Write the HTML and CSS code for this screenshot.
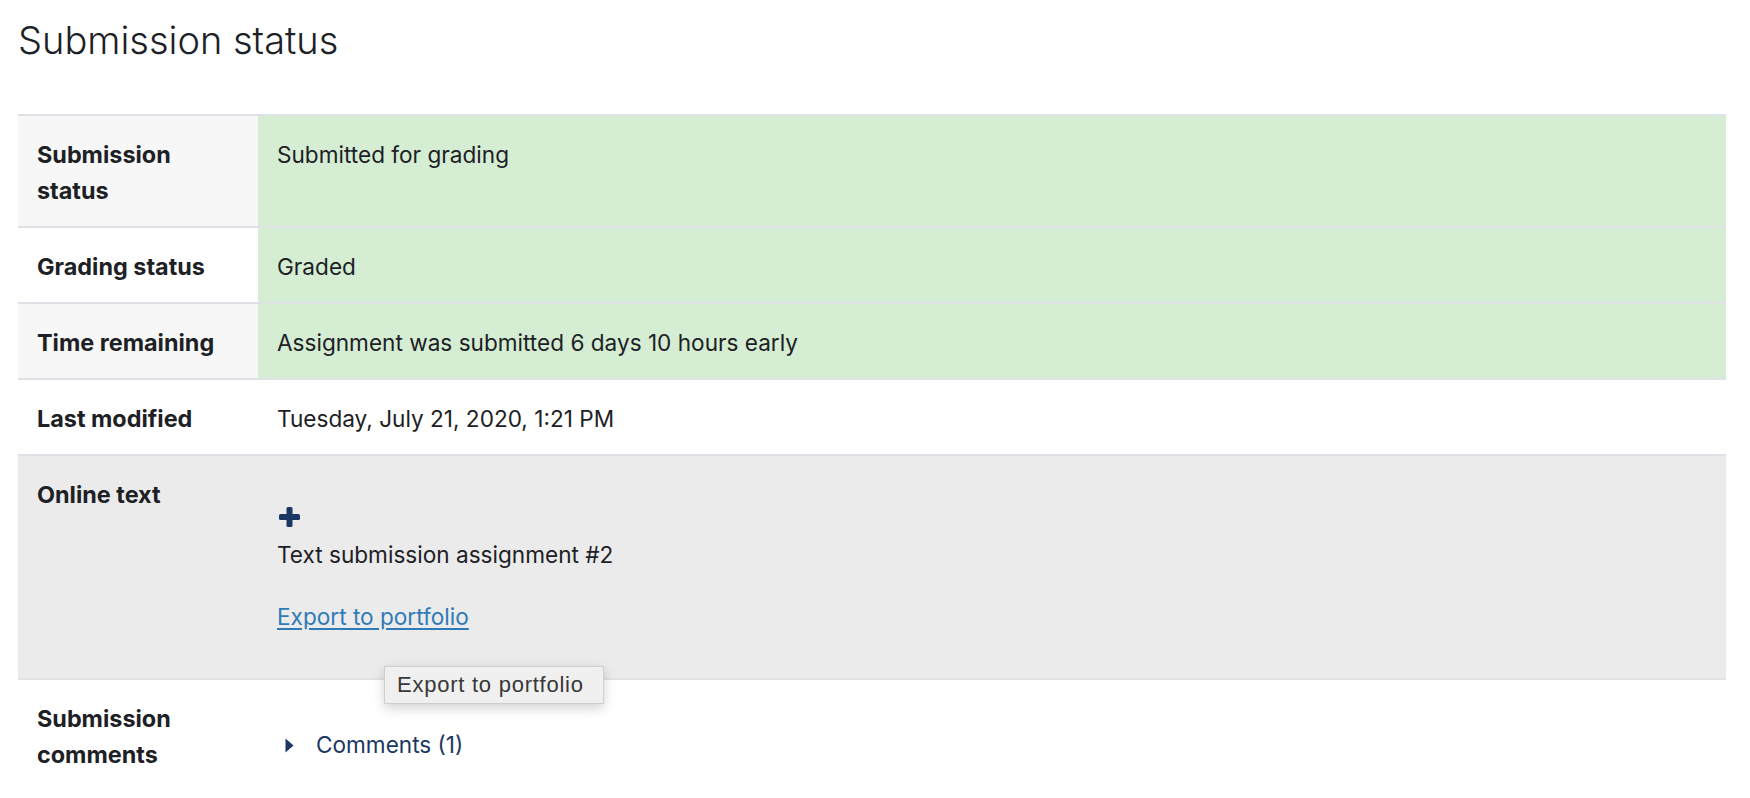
FILE: index.html
```html
<!DOCTYPE html>
<html lang="en">
<head>
<meta charset="utf-8">
<title>Submission status</title>
<link rel="stylesheet" href="styles.css">
</head>
<body>
<div class="page">
  <h2 class="title">Submission status</h2>
  <table class="status">
    <tbody>
      <tr class="row">
        <th class="label">Submission status</th>
        <td class="value ok">Submitted for grading</td>
      </tr>
      <tr class="row">
        <th class="label white">Grading status</th>
        <td class="value ok">Graded</td>
      </tr>
      <tr class="row">
        <th class="label">Time remaining</th>
        <td class="value ok">Assignment was submitted 6 days 10 hours early</td>
      </tr>
      <tr class="row">
        <th class="label white">Last modified</th>
        <td class="value">Tuesday, July 21, 2020, 1:21 PM</td>
      </tr>
      <tr class="row grey">
        <th class="label grey">Online text</th>
        <td class="value">
          <div class="expand">
            <svg class="plus" width="21" height="20" viewBox="0 0 21 20" aria-hidden="true">
              <rect x="7.5" y="0" width="6" height="20" rx="1.5" fill="#1b3763"/>
              <rect x="0" y="7" width="21" height="6" rx="1.5" fill="#1b3763"/>
            </svg>
          </div>
          <div class="summary">Text submission assignment #2</div>
          <div class="portfolio"><a href="#" class="link">Export to portfolio</a></div>
        </td>
      </tr>
      <tr class="row last">
        <th class="label white">Submission comments</th>
        <td class="value">
          <div class="comments">
            <svg class="caret" width="9" height="15" viewBox="0 0 9 15" aria-hidden="true">
              <path d="M0.5 0.5 L8.5 7.5 L0.5 14.5 Z" fill="#1b3763"/>
            </svg>
            <span class="comments-link">Comments (1)</span>
          </div>
        </td>
      </tr>
    </tbody>
  </table>
  <div class="tooltip">Export to portfolio</div>
</div>
</body>
</html>
```

FILE: styles.css
```css
html, body {
  margin: 0;
  padding: 0;
  background: #ffffff;
}

body {
  font-family: Inter, "Noto Sans", "Liberation Sans", sans-serif;
  color: #1d2125;
}

.page {
  position: relative;
  padding: 16px 0 0 18px;
  width: 1708px;
}

.title {
  margin: 0;
  font-size: 38px;
  line-height: 48px;
  font-weight: 300;
  color: #1d2125;
}

.status {
  margin-top: 50px;
  width: 1708px;
  border-collapse: collapse;
  font-size: 22.6px;
  line-height: 36px;
}

.row {
  border-top: 2px solid #dee2e6;
}

.row.last {
  border-top: 2px solid #e3e3e3;
}

.label {
  width: 202px;
  padding: 21px 19px 17px 19px;
  text-align: left;
  vertical-align: top;
  font-weight: 700;
  font-size: 23.4px;
  background: #f7f7f7;
}

.label.white {
  background: #ffffff;
}

.label.grey,
.row.grey {
  background: #ebebeb;
}

.value {
  padding: 21px 19px 17px 19px;
  vertical-align: top;
  font-weight: 400;
}

.value.ok {
  background: #d5edd3;
}

.expand {
  margin-top: 22px;
  height: 36px;
  display: flex;
  align-items: center;
  padding-left: 2px;
}

.summary {
  margin-top: 2px;
  height: 36px;
}

.portfolio {
  margin-top: 26px;
  margin-bottom: 26px;
}

.link {
  color: #2f7bb7;
  text-decoration: underline;
  text-underline-offset: 3px;
}

.comments {
  margin-top: 26px;
  display: flex;
  align-items: center;
  gap: 22px;
  padding-left: 8px;
}

.comments-link {
  color: #1b3763;
}

.tooltip {
  position: absolute;
  left: 384px;
  top: 666px;
  height: 38px;
  padding: 0 19px 0 12px;
  box-sizing: border-box;
  display: flex;
  align-items: center;
  background: #f0f0f0;
  border: 1px solid #cfcfcf;
  box-shadow: 0 4px 12px rgba(0, 0, 0, 0.18);
  font-family: "Liberation Sans", Arial, sans-serif;
  font-size: 22px;
  letter-spacing: 0.75px;
  color: #383838;
}
```
